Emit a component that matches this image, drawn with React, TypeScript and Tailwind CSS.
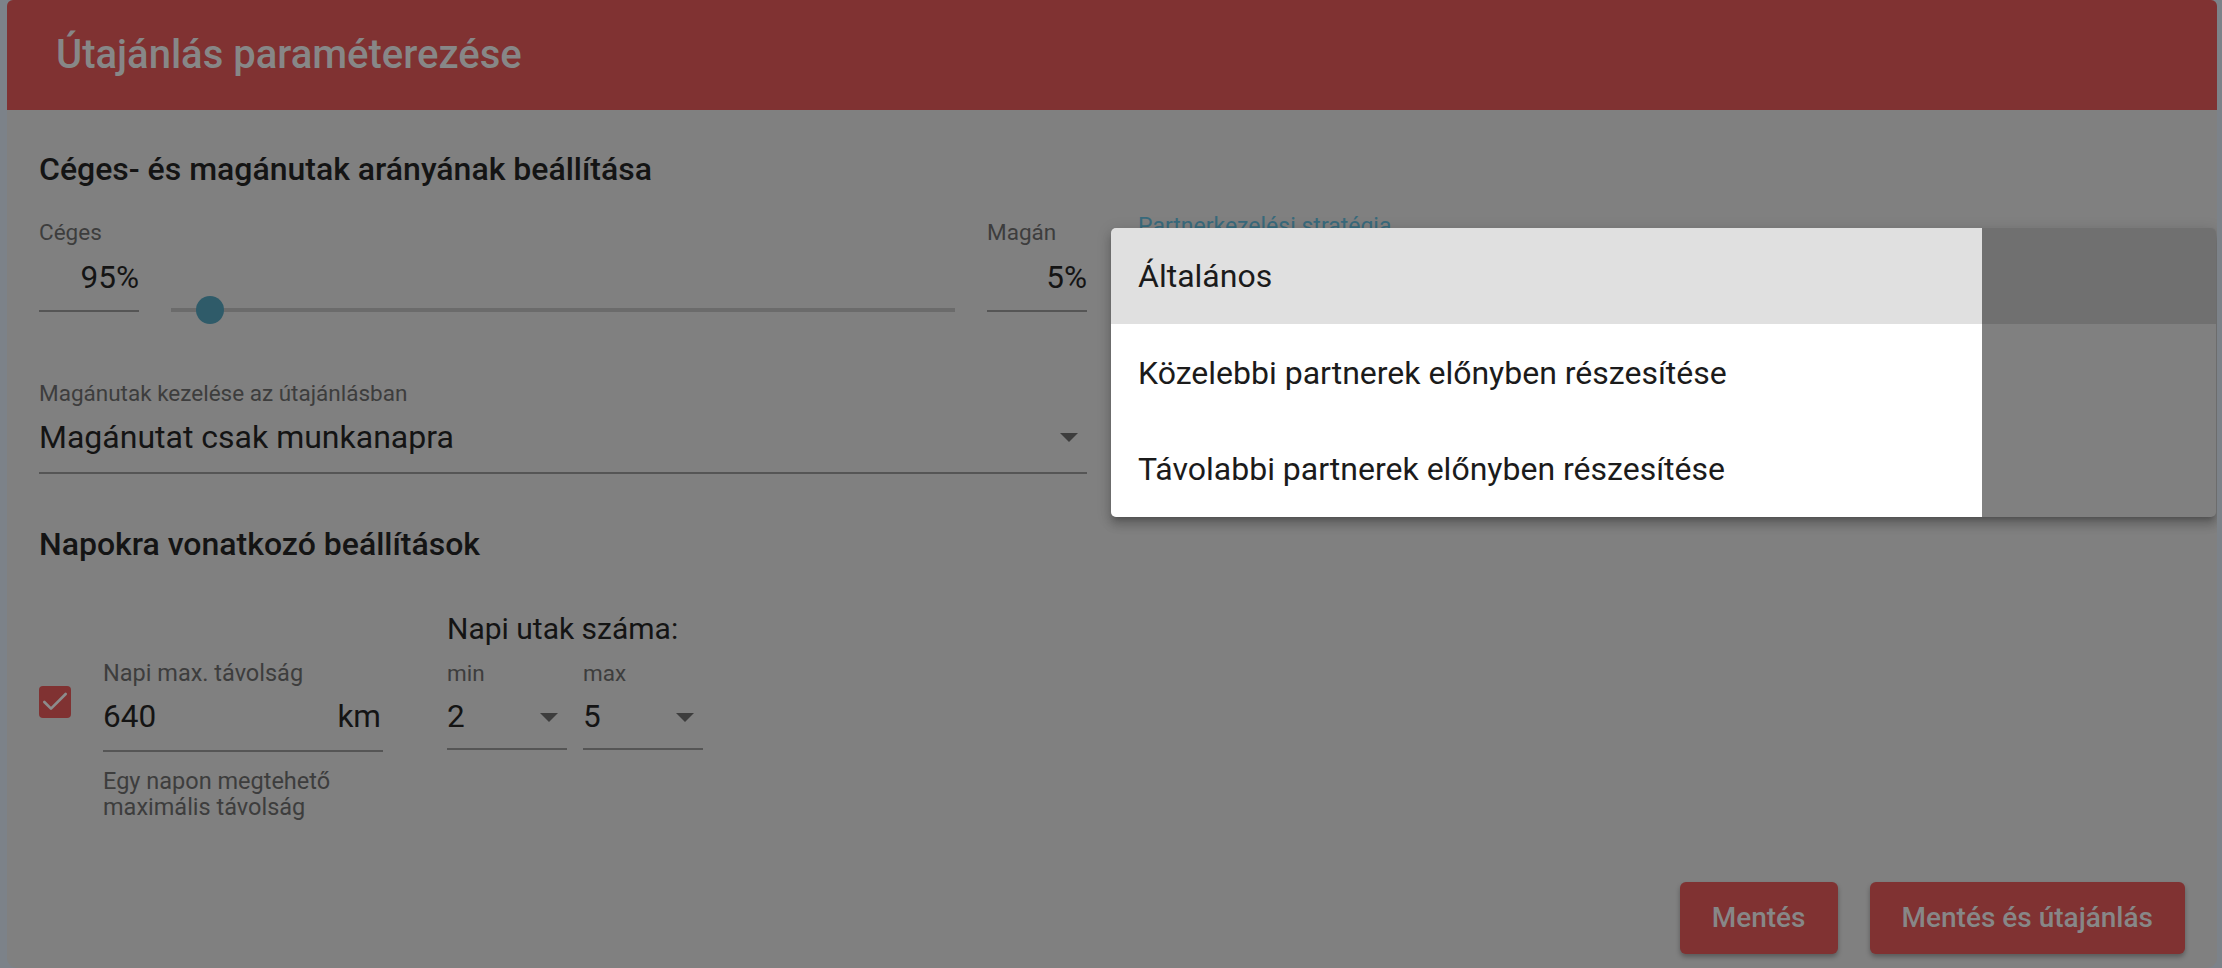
import { Check } from "lucide-react";
import type { ReactNode } from "react";

// Material-ish select arrow
function DropArrow() {
  return (
    <svg width="18" height="9" viewBox="0 0 10 5" className="fill-[#3d3d3d]">
      <path d="M0 0l5 5 5-5z" />
    </svg>
  );
}

function Label({ children }: { children: ReactNode }) {
  return <div className="text-[22.5px] leading-[24px] text-[#3d3d3d]">{children}</div>;
}

function SmallSelect({ label, value }: { label: string; value: string }) {
  return (
    <div className="w-[120px]">
      <Label>{label}</Label>
      <div className="mt-[15px] flex h-[50px] items-start justify-between border-b-2 border-[#555555] pr-[9px]">
        <span className="text-[31.5px] leading-[34px] text-[#141414]">{value}</span>
        <span className="mt-[13px]">
          <DropArrow />
        </span>
      </div>
    </div>
  );
}

const menuItems = [
  { text: "Általános", h: "h-[96px]", active: true },
  { text: "Közelebbi partnerek előnyben részesítése", h: "h-[97px]", active: false },
  { text: "Távolabbi partnerek előnyben részesítése", h: "h-[96px]", active: false },
];

export default function App() {
  return (
    <div className="h-[968px] w-full overflow-hidden bg-[#7c8289] pl-[7px] pr-[5px] font-['Roboto',sans-serif]">
      <div className="relative flex h-full flex-col overflow-hidden rounded-b-[10px] rounded-t-[6px] bg-[#808080]">
        {/* Header */}
        <div className="flex h-[110px] shrink-0 items-center bg-[#803232] pl-[49px]">
          <h1 className="text-[40px] font-medium text-[#878787]">Útajánlás paraméterezése</h1>
        </div>

        {/* Body */}
        <div className="px-8 pt-[39px]">
          <h2 className="text-[32px] font-medium leading-[40px] text-[#141414]">
            Céges- és magánutak arányának beállítása
          </h2>

          <div className="mt-[31px] flex items-end">
            <div className="flex w-[1048px] items-end gap-8">
              <div className="w-[100px]">
                <Label>Céges</Label>
                <div className="mt-[17px] border-b-2 border-[#555555] pb-[15px] text-right text-[31.5px] leading-[34px] text-[#141414]">
                  95%
                </div>
              </div>
              <div className="relative h-1 flex-1 bg-[#6b6b6b]">
                <span className="absolute left-[5%] top-1/2 h-7 w-7 -translate-x-1/2 -translate-y-1/2 rounded-full bg-[#2f5b69]" />
              </div>
              <div className="w-[100px]">
                <Label>Magán</Label>
                <div className="mt-[17px] border-b-2 border-[#555555] pb-[15px] text-right text-[31.5px] leading-[34px] text-[#141414]">
                  5%
                </div>
              </div>
            </div>
            <div className="ml-8 -mt-[5px] flex-1 self-start pl-[19px]">
              <div className="text-[23px] leading-[24px] text-[#386a7c]">Partnerkezelési stratégia</div>
            </div>
          </div>

          <div className="mt-[69px] w-[1048px]">
            <Label>Magánutak kezelése az útajánlásban</Label>
            <div className="mt-[15px] flex items-center justify-between border-b-2 border-[#555555] pb-[18px] pr-[9px]">
              <span className="text-[32px] leading-[34px] text-[#141414]">Magánutat csak munkanapra</span>
              <DropArrow />
            </div>
          </div>

          <h2 className="mt-[50px] text-[32px] font-medium leading-[40px] text-[#141414]">
            Napokra vonatkozó beállítások
          </h2>

          <div className="mt-[48px] flex items-start">
            <div className="mt-[74px] flex h-8 w-8 items-center justify-center rounded-[4px] bg-[#803232]">
              <Check size={32} strokeWidth={2} className="shrink-0 text-[#8c8c8c]" />
            </div>
            <div className="ml-8 mt-[49px] w-[280px]">
              <div className="text-[23.5px] leading-[24px] text-[#3d3d3d]">Napi max. távolság</div>
              <div className="mt-[15px] flex justify-between border-b-2 border-[#555555] pb-[16px] text-[31.5px] leading-[34px] text-[#141414]">
                <span>640</span>
                <span className="pr-[2px]">km</span>
              </div>
              <div className="mt-[16px] text-[23.5px] leading-[26px] text-[#3d3d3d]">
                Egy napon megtehető maximális távolság
              </div>
            </div>
            <div className="ml-16">
              <div className="text-[30px] leading-[34px] text-[#141414]">Napi utak száma:</div>
              <div className="mt-[15px] flex gap-4">
                <SmallSelect label="min" value="2" />
                <SmallSelect label="max" value="5" />
              </div>
            </div>
          </div>
        </div>

        {/* Actions */}
        <div className="mt-auto flex justify-end gap-8 pb-[14px] pr-8">
          <button className="h-[72px] rounded-[6px] bg-[#803232] px-8 text-[28px] font-medium text-[#878787] shadow-[0_3px_5px_rgba(0,0,0,0.3)]">
            Mentés
          </button>
          <button className="h-[72px] rounded-[6px] bg-[#803232] px-8 text-[28px] font-medium text-[#878787] shadow-[0_3px_5px_rgba(0,0,0,0.3)]">
            Mentés és útajánlás
          </button>
        </div>

        {/* Open dropdown menu */}
        <div className="absolute left-[1104px] top-[228px] w-[1105px] overflow-hidden rounded-[5px] shadow-[0_5px_5px_-3px_rgba(0,0,0,0.2),0_8px_10px_1px_rgba(0,0,0,0.14),0_3px_14px_2px_rgba(0,0,0,0.12)]">
          <div className="absolute inset-y-0 left-0 w-[871px] bg-white" />
          {menuItems.map((item) => (
            <div
              key={item.text}
              className={`relative flex items-center px-[27px] text-[32px] text-[#1b1b1b] ${item.h} ${
                item.active ? "bg-black/[0.12]" : ""
              }`}
            >
              {item.text}
            </div>
          ))}
        </div>
      </div>
    </div>
  );
}
